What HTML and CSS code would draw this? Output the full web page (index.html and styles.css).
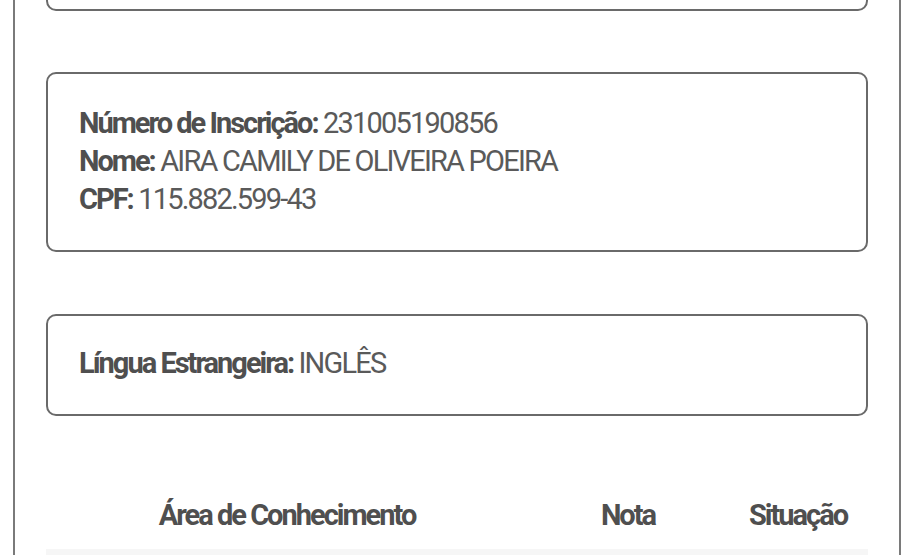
FILE: index.html
```html
<!DOCTYPE html>
<html lang="pt-BR">
<head>
<meta charset="utf-8">
<title>Resultado</title>
<link rel="stylesheet" href="styles.css">
</head>
<body>
<div class="frame">
  <section class="card card-top"></section>

  <section class="card card-info">
    <p class="line"><b>Número de Inscrição:</b> 231005190856</p>
    <p class="line"><b>Nome:</b> AIRA CAMILY DE OLIVEIRA POEIRA</p>
    <p class="line"><b>CPF:</b> 115.882.599-43</p>
  </section>

  <section class="card card-lang">
    <p class="line"><b>Língua Estrangeira:</b> INGLÊS</p>
  </section>

  <table class="grades">
    <colgroup>
      <col class="col-area">
      <col class="col-nota">
      <col class="col-sit">
    </colgroup>
    <thead>
      <tr>
        <th>Área de Conhecimento</th>
        <th>Nota</th>
        <th>Situação</th>
      </tr>
    </thead>
    <tbody>
      <tr class="stripe">
        <td></td>
        <td></td>
        <td></td>
      </tr>
    </tbody>
  </table>
</div>
</body>
</html>
```

FILE: styles.css
```css
html, body {
  margin: 0;
  padding: 0;
  background: #ffffff;
  overflow: hidden;
}

body {
  font-family: Roboto, "Liberation Sans", sans-serif;
  color: #585858;
  padding: 0 14px 0 13px;
}

.frame {
  margin-top: -60px;
  border-left: 2px solid #7a7a7a;
  border-right: 2px solid #7a7a7a;
  padding: 0 31px;
  min-height: 700px;
}

.card {
  border: 2px solid #6a6a6a;
  border-radius: 10px;
  padding: 30px 32px 32px 31px;
  margin: 0 0 62px 0;
}

.card-top {
  height: 67px;
  padding: 0;
  margin-bottom: 61px;
}

.line {
  margin: 0;
  font-size: 29px;
  line-height: 38px;
  letter-spacing: -1.8px;
  font-weight: 400;
  color: #5a5a5a;
}

.line b {
  font-weight: 700;
  letter-spacing: -2px;
  color: #4f4f4f;
}

.card-lang {
  padding-top: 28px;
  padding-bottom: 32px;
}

.grades {
  width: 100%;
  border-collapse: collapse;
  margin-top: 0;
}

.col-area { width: 482px; }
.col-nota { width: 200px; }
.col-sit { width: 140px; }

.grades th {
  font-size: 29px;
  line-height: 38px;
  letter-spacing: -2px;
  text-align: center;
  font-weight: 700;
  color: #4f4f4f;
  padding: 18px 0 15px;
}

.grades td {
  height: 70px;
  padding: 0;
}

.stripe {
  background: #f6f6f6;
}
```
